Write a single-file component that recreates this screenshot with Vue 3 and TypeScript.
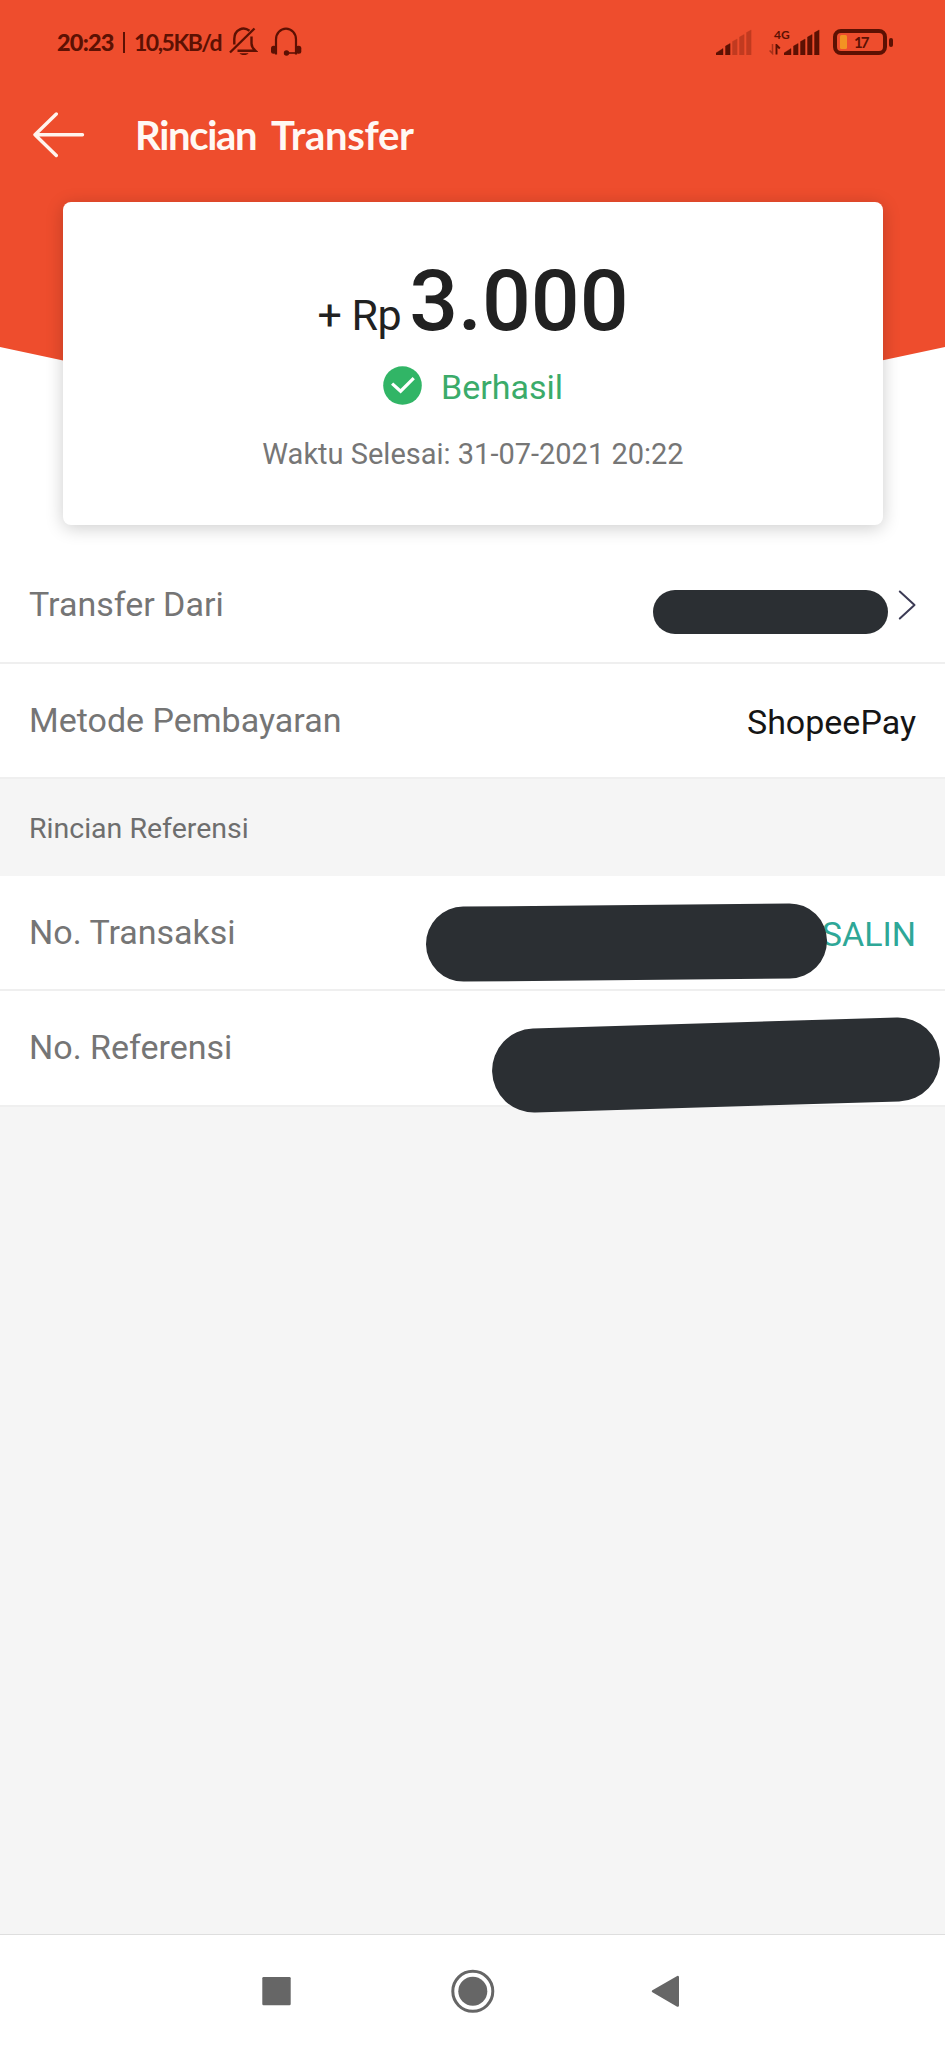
<script setup lang="ts">
interface Bar {
  x: number
  h: number
}

const bars: Bar[] = [
  { x: 0, h: 6.5 },
  { x: 9.5, h: 11.5 },
  { x: 16.5, h: 16 },
  { x: 23.5, h: 20.5 },
  { x: 30.5, h: 25 },
]

function barPath(b: Bar, first: boolean): string {
  const w = first ? 7 : 4.6
  const slope = first ? 4.5 : 2.6
  const top = 26 - b.h
  return `M${b.x} 26V${top + slope}L${b.x + w} ${top}V26Z`
}
</script>

<template>
  <div class="screen">
    <header class="header">
      <div class="status">
        <span class="clock">20:23</span>
        <span class="sep"></span>
        <span class="speed">10,5KB/d</span>
        <svg class="bell" width="29" height="30" viewBox="0 0 29 30" fill="none" stroke="#5c1103" stroke-width="2.4">
          <path d="M20.5 3.8C17.8 1.6 13.8.8 10.5 2.6C6.500 4.600 5.300 8.200 5.300 12V17.500" />
          <path d="M22.500 9.500V16.500C22.500 19.500 24 21.500 26.500 23.800H8.500" />
          <path d="M1 25.500L25.500 1.500" />
          <path d="M10.500 26.200H19.500C18.500 28.600 11.500 28.600 10.500 26.200Z" fill="#5c1103" stroke="none" />
        </svg>
        <svg class="headset" width="32" height="30" viewBox="0 0 32 30" fill="none" stroke="#5c1103" stroke-width="2.200">
          <path d="M6 27.500V12.500C6 6.500 10.500 1.700 16 1.700S26 6.500 26 12.500V27.500" />
          <path d="M17 26H26" stroke-width="1.600" />
          <rect x="1" y="18.800" width="5.500" height="8" rx="2.500" fill="#5c1103" stroke="none" />
          <rect x="25.800" y="18.800" width="5.500" height="8" rx="2.500" fill="#5c1103" stroke="none" />
          <circle cx="16.500" cy="26" r="2.700" fill="#5c1103" stroke="none" />
        </svg>
        <div class="status-right">
          <svg width="36" height="26" viewBox="0 0 36 26">
            <path v-for="(b, i) in bars" :key="i" :d="barPath(b, i === 0)" fill="#5c1103" stroke="#5c1103" stroke-width=".4" stroke-linejoin="round" :opacity="i < 2 ? 1 : 0.3" />
          </svg>
          <div class="network">
            <span class="gen">4G</span>
            <svg width="12" height="11" viewBox="0 0 12 11" fill="none" stroke="#5c1103">
              <path d="M3.500 0V9.500L.6 6.500" stroke-width="1.500" opacity=".5" />
              <path d="M7.500 10.500V1L10.800 4.500" stroke-width="1.900" />
            </svg>
          </div>
          <svg class="signal-b" width="36" height="26" viewBox="0 0 36 26">
            <path v-for="(b, i) in bars" :key="i" :d="barPath(b, i === 0)" fill="#5c1103" stroke="#5c1103" stroke-width=".4" stroke-linejoin="round" />
          </svg>
          <div class="battery">
            <span class="level"></span>
            <span class="percent">17</span>
          </div>
          <span class="battery-tip"></span>
        </div>
      </div>

      <div class="titlebar">
        <svg class="back" width="54" height="46" viewBox="0 0 54 46" fill="none" stroke="#fff4ee" stroke-width="3.400" stroke-linecap="round" stroke-linejoin="round">
          <path d="M24.300 2L3 22.800L24.300 43.500M3 22.800H50.500" />
        </svg>
        <h1><span>Rincian</span><span class="word-b">Transfer</span></h1>
      </div>
    </header>

    <section class="card">
      <div class="amount"><span class="currency">+ Rp</span><span class="value">3.000</span></div>
      <div class="state">
        <svg width="39" height="39" viewBox="0 0 39 39">
          <circle cx="19.500" cy="19.500" r="19.300" fill="#31b566" />
          <path d="M10.300 18.700L17.600 25.200L29.600 13.300" fill="none" stroke="#fff" stroke-width="3.200" stroke-linecap="square" />
        </svg>
        <span>Berhasil</span>
      </div>
      <div class="time">Waktu Selesai: 31-07-2021 20:22</div>
    </section>

    <main>
      <div class="row">
        <span class="label">Transfer Dari</span>
        <span class="pill pill-a"></span>
        <svg class="chevron" width="18" height="30" viewBox="0 0 18 30" fill="none" stroke="#3c3b55" stroke-width="2" stroke-linecap="round" stroke-linejoin="round">
          <path d="M1.800 1.500L16.500 15L1.800 28.500" />
        </svg>
      </div>
      <div class="row">
        <span class="label">Metode Pembayaran</span>
        <span class="text pay">ShopeePay</span>
      </div>
      <h2>Rincian Referensi</h2>
      <div class="row">
        <span class="label">No. Transaksi</span>
        <span class="text copy">SALIN</span>
        <span class="pill pill-b"></span>
      </div>
      <div class="row">
        <span class="label">No. Referensi</span>
        <span class="pill pill-c"></span>
      </div>
    </main>

    <nav class="nav">
      <svg width="945" height="113" viewBox="0 0 945 113" fill="#666">
        <rect x="262.300" y="42" width="28.400" height="28.200" rx="1.200" />
        <circle cx="472.800" cy="56.300" r="20" fill="none" stroke="#666" stroke-width="3" />
        <circle cx="472.800" cy="56.300" r="14.500" />
        <path d="M653 56.300L677.800 42V70.600Z" stroke="#666" stroke-width="2.400" stroke-linejoin="round" />
      </svg>
    </nav>
  </div>
</template>

<style>
body {
  margin: 0;
}
</style>

<style scoped>
.screen {
  position: relative;
  z-index: 0;
  display: flex;
  flex-direction: column;
  width: 945px;
  height: 2048px;
  overflow: hidden;
  background: #f5f5f5;
  font-family: Roboto, "Liberation Sans", sans-serif;
}
.header {
  position: relative;
  height: 202px;
  flex: none;
}
.header::before {
  content: "";
  position: absolute;
  z-index: -1;
  inset: 0 0 auto;
  height: 448px;
  background: #ee4d2d;
  clip-path: polygon(0 0, 100% 0, 100% 347px, 50% 100%, 0 347px);
}
.header::after {
  content: "";
  position: absolute;
  z-index: -2;
  inset: 0 0 auto;
  height: 560px;
  background: #fff;
}
.status {
  display: flex;
  align-items: center;
  height: 84px;
  padding: 0 52px 0 57px;
  box-sizing: border-box;
  color: #5c1103;
  font-family: Lato, sans-serif;
}
.clock {
  width: 57px;
  font-size: 23.500px;
  font-weight: 900;
  letter-spacing: -0.800px;
  white-space: nowrap;
}
.sep {
  width: 2px;
  height: 21px;
  margin: 0 9px 0 9px;
  background: #5c1103;
}
.speed {
  width: 88px;
  font-size: 23px;
  font-weight: 700;
  letter-spacing: -1.500px;
  white-space: nowrap;
}
.bell {
  margin-left: 7px;
}
.headset {
  margin-left: 12px;
}
.status-right {
  display: flex;
  align-items: center;
  margin-left: auto;
}
.network {
  display: flex;
  flex-direction: column;
  width: 24px;
  height: 27px;
  margin-left: 17px;
}
.gen {
  height: 15px;
  padding-left: 5px;
  font-size: 12px;
  font-weight: 700;
  line-height: 11px;
  white-space: nowrap;
}
.signal-b {
  margin-left: -9px;
}
.battery {
  display: flex;
  align-items: center;
  width: 54px;
  height: 26px;
  margin-left: 13px;
  padding-left: 3px;
  box-sizing: border-box;
  border: 4px solid #5c1103;
  border-radius: 8px;
}
.level {
  width: 7px;
  height: 14px;
  background: #f39223;
  border-radius: 1.500px;
}
.percent {
  margin-left: 7px;
  font-size: 15px;
  font-weight: 700;
  line-height: 16px;
  letter-spacing: -2px;
}
.battery-tip {
  width: 4px;
  height: 9px;
  margin-left: 2px;
  border-radius: 2px;
  background: #5c1103;
}
.titlebar {
  display: flex;
  align-items: center;
  height: 101px;
  padding-left: 32px;
}
h1 {
  display: flex;
  margin: 0 0 0 49px;
  color: #fff8f4;
  font: 700 40px/50px Lato, sans-serif;
  letter-spacing: -1.300px;
}
h1 span {
  width: 136px;
}
h1 .word-b {
  letter-spacing: -0.300px;
}
.card {
  display: flex;
  flex: none;
  flex-direction: column;
  align-items: center;
  width: 820px;
  height: 323px;
  margin: 0 auto 0 63px;
  background: #fff;
  border-radius: 8px;
  box-shadow: 0 3px 18px rgba(0, 0, 0, 0.2);
}
.amount {
  display: flex;
  align-items: baseline;
  height: 100px;
  margin-top: 49px;
  color: #212121;
  line-height: 100px;
}
.currency {
  font-size: 43px;
  letter-spacing: -0.500px;
}
.value {
  margin-left: 8px;
  font-size: 86px;
  font-weight: 500;
}
.state {
  display: flex;
  align-items: center;
  height: 40px;
  margin-top: 14px;
  color: #3bab6a;
  font-size: 34px;
  line-height: 40px;
}
.state span {
  margin: 3px 0 0 19px;
}
.time {
  margin-top: 29px;
  color: #767676;
  font-size: 29px;
  line-height: 40px;
}
main {
  display: flex;
  flex-direction: column;
  padding-top: 22px;
}
.row {
  position: relative;
  display: flex;
  align-items: center;
  justify-content: space-between;
  height: 115.200px;
  padding: 0 29px 0 29px;
  box-sizing: border-box;
  border-bottom: 2px solid #efefef;
  background: #fff;
}
.row:first-child {
  height: 117px;
}
.label {
  margin-bottom: 2px;
  color: #757575;
  font-size: 34px;
  line-height: 40px;
}
.text {
  font-size: 34px;
  line-height: 40px;
}
.pay {
  margin-top: 3px;
  color: #151515;
}
.copy {
  margin-top: 3px;
  color: #2ea797;
}
.pill {
  background: #2b2f33;
  border-radius: 50px;
}
.pill-a {
  width: 235px;
  height: 44.500px;
  margin: 15px 10px 0 auto;
}
.pill-b,
.pill-c {
  position: absolute;
  z-index: 1;
}
.pill-b {
  left: 426.300px;
  top: 28.800px;
  width: 401px;
  height: 75px;
  transform: rotate(-0.570deg);
}
.pill-c {
  left: 492px;
  top: 31.800px;
  width: 448px;
  height: 84px;
  transform: rotate(-1.750deg);
}
h2 {
  height: 97px;
  margin: 0;
  padding-left: 29px;
  color: #6e6e6e;
  font-size: 28.500px;
  font-weight: 400;
  line-height: 100px;
}
.nav {
  height: 113px;
  margin-top: auto;
  border-top: 1px solid #dedede;
  background: #fff;
}
.nav svg {
  display: block;
}
</style>
